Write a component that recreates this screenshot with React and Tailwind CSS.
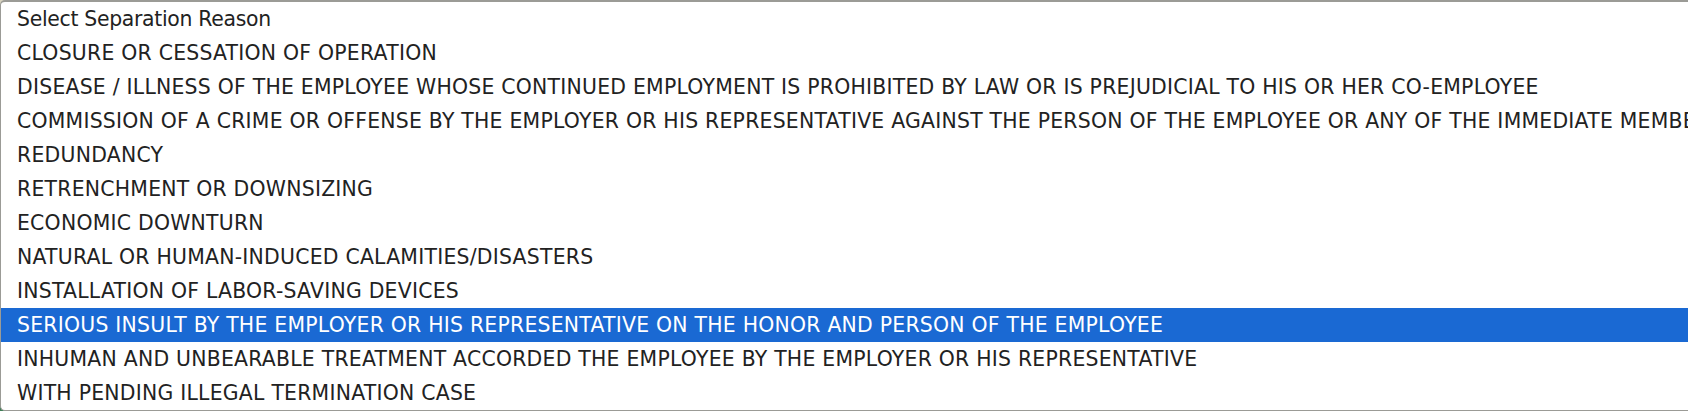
import React from "react";

const reasons = [
  "Select Separation Reason",
  "CLOSURE OR CESSATION OF OPERATION",
  "DISEASE / ILLNESS OF THE EMPLOYEE WHOSE CONTINUED EMPLOYMENT IS PROHIBITED BY LAW OR IS PREJUDICIAL TO HIS OR HER CO-EMPLOYEE",
  "COMMISSION OF A CRIME OR OFFENSE BY THE EMPLOYER OR HIS REPRESENTATIVE AGAINST THE PERSON OF THE EMPLOYEE OR ANY OF THE IMMEDIATE MEMBERS OF HIS FAMILY",
  "REDUNDANCY",
  "RETRENCHMENT OR DOWNSIZING",
  "ECONOMIC DOWNTURN",
  "NATURAL OR HUMAN-INDUCED CALAMITIES/DISASTERS",
  "INSTALLATION OF LABOR-SAVING DEVICES",
  "SERIOUS INSULT BY THE EMPLOYER OR HIS REPRESENTATIVE ON THE HONOR AND PERSON OF THE EMPLOYEE",
  "INHUMAN AND UNBEARABLE TREATMENT ACCORDED THE EMPLOYEE BY THE EMPLOYER OR HIS REPRESENTATIVE",
  "WITH PENDING ILLEGAL TERMINATION CASE",
];

const SELECTED = 9;

export default function App() {
  return (
    <div className="w-[1688px] h-[411px] overflow-hidden bg-linear-to-b from-[#d9d4c0] to-[#3d7d55]">
      {/* Dropdown list */}
      <ul className="w-[1800px] h-[411px] bg-white border-t-2 border-l border-b border-[#9b9b96] rounded-l-[5px] overflow-hidden font-['DejaVu_Sans',sans-serif] text-[20.4px] text-[#222] whitespace-nowrap">
        {reasons.map((r, i) => (
          <li
            key={i}
            className={
              i === SELECTED
                ? "h-[34px] flex items-center pl-[16px] tracking-[0.24px] bg-[#1a69d3] text-white"
                : i === 0
                ? "h-[34px] flex items-center pl-[16px] tracking-[-0.3px]"
                : "h-[34px] flex items-center pl-[16px] tracking-[0.24px]"
            }
          >
            {r}
          </li>
        ))}
      </ul>
    </div>
  );
}
